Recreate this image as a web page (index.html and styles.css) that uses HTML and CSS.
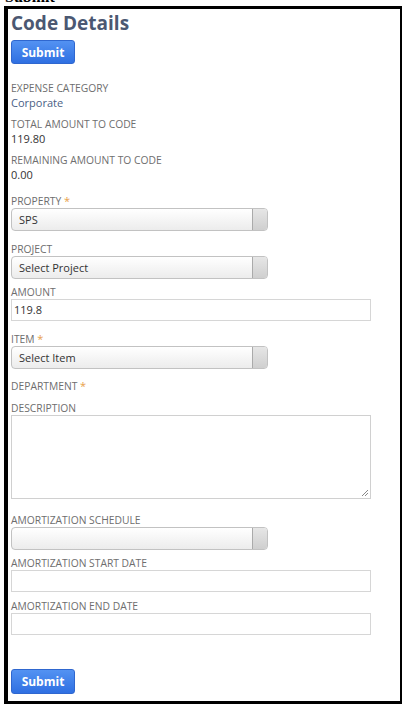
FILE: index.html
```html
<!DOCTYPE html>
<html>
<head>
<meta charset="utf-8">
<link rel="stylesheet" href="styles.css">
</head>
<body>
<div class="page-title">Submit</div>
<div class="frame">
  <h1 class="heading">Code Details</h1>
  <button class="btn">Submit</button>

  <div class="info">
    <div class="label">EXPENSE CATEGORY</div>
    <div class="value value-link">Corporate</div>
  </div>
  <div class="info">
    <div class="label">TOTAL AMOUNT TO CODE</div>
    <div class="value">119.80</div>
  </div>
  <div class="info info-last">
    <div class="label">REMAINING AMOUNT TO CODE</div>
    <div class="value">0.00</div>
  </div>

  <div class="field gap-m">
    <div class="label">PROPERTY <span class="req">*</span></div>
    <div class="select"><span class="select-text">SPS</span><span class="select-btn"></span></div>
  </div>
  <div class="field gap-s">
    <div class="label">PROJECT</div>
    <div class="select"><span class="select-text">Select Project</span><span class="select-btn"></span></div>
  </div>
  <div class="field gap-m">
    <div class="label">AMOUNT</div>
    <div class="input">119.8</div>
  </div>
  <div class="field gap-ms">
    <div class="label">ITEM <span class="req">*</span></div>
    <div class="select"><span class="select-text">Select Item</span><span class="select-btn"></span></div>
  </div>
  <div class="field gap-sm">
    <div class="label">DEPARTMENT <span class="req">*</span></div>
  </div>
  <div class="field gap-l">
    <div class="label">DESCRIPTION</div>
    <div class="textarea">
      <svg class="grip" width="8" height="8" viewBox="0 0 8 8"><path d="M7 1L1 7M7 4L4 7" stroke="#888" stroke-width="1"/></svg>
    </div>
  </div>
  <div class="field gap-s">
    <div class="label">AMORTIZATION SCHEDULE</div>
    <div class="select"><span class="select-text"></span><span class="select-btn"></span></div>
  </div>
  <div class="field gap-sm">
    <div class="label">AMORTIZATION START DATE</div>
    <div class="input"></div>
  </div>
  <div class="field gap-xl">
    <div class="label">AMORTIZATION END DATE</div>
    <div class="input"></div>
  </div>
  <button class="btn btn-bottom">Submit</button>
</div>
</body>
</html>
```

FILE: styles.css
```css
html, body {
  margin: 0;
  padding: 0;
  background: #fff;
}
body {
  overflow: hidden;
}
.page-title {
  font-family: "Liberation Serif", serif;
  font-weight: bold;
  font-size: 16px;
  line-height: 18px;
  margin-top: -12px;
  margin-left: 5px;
  height: 18px;
  color: #000;
}
.frame {
  margin-left: 4px;
  width: 389px;
  height: 692px;
  border-style: solid;
  border-color: #000;
  border-width: 3px 2px 3px 4px;
  padding: 0 0 0 3px;
  box-sizing: content-box;
  font-family: "Open Sans", sans-serif;
}
.heading {
  margin: 0;
  padding-top: 2px;
  font-size: 19px;
  line-height: 24px;
  font-weight: bold;
  color: #4b5872;
}
.btn {
  display: block;
  margin: 5px 0 0 0;
  width: 64px;
  height: 24px;
  padding: 0;
  border: 1px solid #2f67cf;
  border-radius: 3px;
  background: linear-gradient(#5392f2, #2f70e2);
  color: #fff;
  font-family: "Open Sans", sans-serif;
  font-weight: bold;
  font-size: 12px;
}
.btn-bottom {
  margin-top: 0;
  height: 25px;
}
.btn + .info {
  margin-top: 17px;
}
.info + .info {
  margin-top: 6px;
}
.info-last {
  margin-bottom: 11px;
}
.label {
  font-size: 10.3px;
  line-height: 14px;
  color: #6e6e6e;
  white-space: nowrap;
}
.req {
  color: #e8a04a;
  font-size: 11px;
}
.value {
  font-size: 11px;
  line-height: 16px;
  color: #333;
}
.value-link {
  color: #4a6186;
}
.gap-s {
  margin-bottom: 6px;
}
.gap-sm {
  margin-bottom: 7.5px;
}
.gap-ms {
  margin-bottom: 10px;
}
.gap-m {
  margin-bottom: 11px;
}
.gap-l {
  margin-bottom: 14px;
}
.gap-xl {
  margin-bottom: 34px;
}
.select {
  display: flex;
  width: 257px;
  height: 23px;
  box-sizing: border-box;
  border: 1px solid #c2c2c2;
  border-radius: 4px;
  background: linear-gradient(#ffffff, #ececec);
  overflow: hidden;
}
.select-text {
  flex: 1;
  padding-left: 7px;
  font-size: 11px;
  line-height: 21px;
  color: #333;
}
.select-btn {
  width: 14px;
  border-left: 1px solid #aaa;
  background: linear-gradient(#e6e6e6, #cfcfcf);
}
.input {
  width: 360px;
  height: 22px;
  box-sizing: border-box;
  border: 1px solid #d6d6d6;
  padding-left: 2px;
  font-size: 11px;
  line-height: 20px;
  color: #333;
}
.textarea {
  position: relative;
  width: 360px;
  height: 84px;
  box-sizing: border-box;
  border: 1px solid #d0d0d0;
}
.grip {
  position: absolute;
  right: 1px;
  bottom: 1px;
}
```
